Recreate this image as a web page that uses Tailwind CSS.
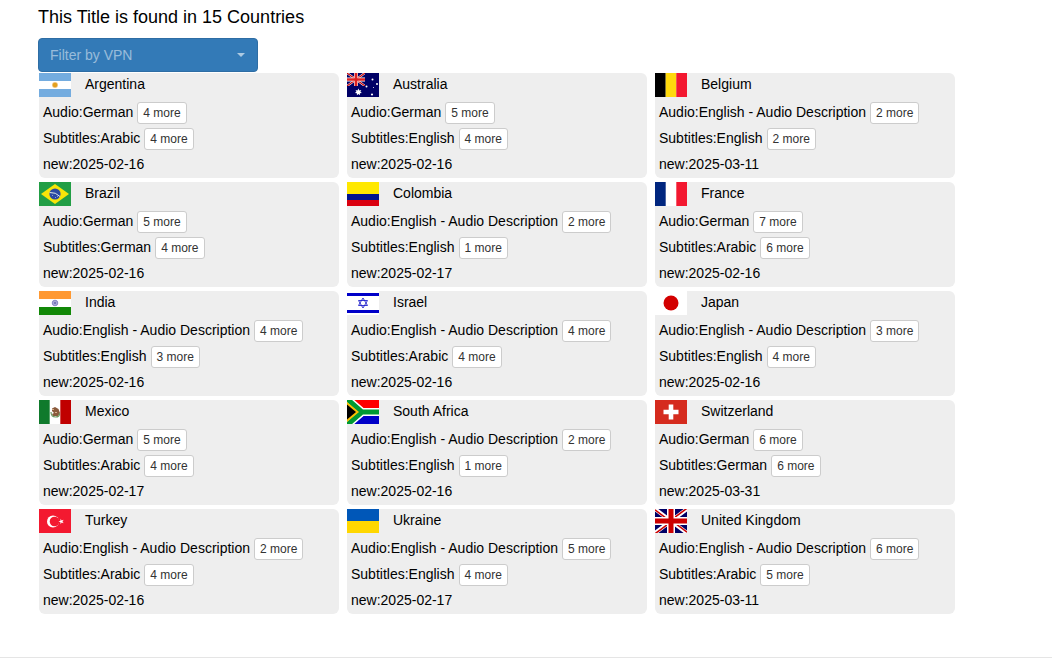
<!DOCTYPE html>
<html lang="en">
<head>
    <meta charset="UTF-8">
    <meta name="viewport" content="width=device-width, initial-scale=1.0">
    <title>Countries</title>
    <script src="https://cdn.jsdelivr.net/npm/@tailwindcss/browser@4"></script>
</head>
<body class="bg-white font-['Liberation_Sans',Arial,sans-serif] text-sm text-black">

    <!-- flags -->
    <svg class="hidden">
        <symbol id="ar" viewBox="0 0 32 24">
            <path fill="#fff" d="M0 0h32v24H0z"/>
            <path fill="#74acdf" d="M0 0h32v8H0zM0 16h32v8H0z"/>
            <circle cx="16" cy="12" r="3" fill="#f3c989"/>
            <circle cx="16" cy="12" r="2.3" fill="#e3a01f"/>
        </symbol>
        <symbol id="au" viewBox="0 0 32 24">
            <path fill="#006" d="M0 0h32v24H0z"/>
            <svg width="18" height="13" viewBox="0 0 32 24" preserveAspectRatio="none">
                <path stroke="#fff" stroke-width="4" d="M0 0l32 24M32 0L0 24"/>
                <path stroke="#c00" stroke-width="2" d="M0 0l32 24M32 0L0 24"/>
                <path stroke="#fff" stroke-width="7" d="M16 0v24M0 12h32"/>
                <path stroke="#d22" stroke-width="5" d="M16 0v24M0 12h32"/>
            </svg>
            <path fill="#fff" d="M11.500 15.500l.8 1.900 2-.5-.9 1.800 1.500 1.300-2 .3v2l-1.500-1.300-1.500 1.300v-2l-2-.3 1.500-1.300-.9-1.800 2 .5z"/>
            <g fill="#fff">
                <circle cx="19.500" cy="13.500" r="1"/>
                <circle cx="25.500" cy="6.500" r="1"/>
                <circle cx="30" cy="11" r="1"/>
                <circle cx="25" cy="21.500" r="1.100"/>
                <circle cx="26.500" cy="14.500" r=".5"/>
            </g>
        </symbol>
        <symbol id="be" viewBox="0 0 32 24">
            <path d="M0 0h10.700v24H0z"/>
            <path fill="#ffd90c" d="M10.700 0h10.600v24H10.700z"/>
            <path fill="#f31830" d="M21.300 0H32v24H21.300z"/>
        </symbol>
        <symbol id="br" viewBox="0 0 32 24">
            <path fill="#229e45" d="M0 0h32v24H0z"/>
            <path fill="#f8e509" d="M16 2l14 10-14 10L2 12z"/>
            <circle cx="16" cy="12" r="5.600" fill="#2b49a3"/>
            <path fill="none" stroke="#dfe8e8" d="M10.700 10.500q6-.5 10.300 4"/>
            <path fill="#8d9ccc" d="M13 13h1v1h-1zM16 15h1v1h-1zM18 14h1v1h-1z"/>
        </symbol>
        <symbol id="co" viewBox="0 0 32 24">
            <path fill="#ffe800" d="M0 0h32v12H0z"/>
            <path fill="#00148e" d="M0 12h32v6H0z"/>
            <path fill="#da0010" d="M0 18h32v6H0z"/>
        </symbol>
        <symbol id="fr" viewBox="0 0 32 24">
            <path fill="#fff" d="M0 0h32v24H0z"/>
            <path fill="#00267f" d="M0 0h10.700v24H0z"/>
            <path fill="#f31830" d="M21.300 0H32v24H21.300z"/>
        </symbol>
        <symbol id="in" viewBox="0 0 32 24">
            <path fill="#fff" d="M0 0h32v24H0z"/>
            <path fill="#f93" d="M0 0h32v8H0z"/>
            <path fill="#128807" d="M0 16h32v8H0z"/>
            <circle cx="16" cy="12" r="2.800" fill="#a9a9d6" stroke="#8080c0" stroke-width=".9"/>
            <circle cx="16" cy="12" r="1" fill="#6666b0"/>
        </symbol>
        <symbol id="il" viewBox="0 0 32 24">
            <path fill="#fff" d="M0 0h32v24H0z"/>
            <path fill="#0000c8" d="M0 2h32v3H0zM0 19h32v3H0z"/>
            <path fill="none" stroke="#2222cc" stroke-width=".9" d="M16 7l4.500 7.500h-9zM16 17l4.500-7.500h-9z"/>
        </symbol>
        <symbol id="jp" viewBox="0 0 32 24">
            <path fill="#fff" d="M0 0h32v24H0z"/>
            <circle cx="16" cy="12" r="7.500" fill="#d30000"/>
        </symbol>
        <symbol id="mx" viewBox="0 0 32 24">
            <path fill="#fff" d="M0 0h32v24H0z"/>
            <path fill="#0f7a2c" d="M0 0h10.700v24H0z"/>
            <path fill="#c00000" d="M21.300 0H32v24H21.300z"/>
            <path fill="#8a5a3c" d="M13 8.500l3-1.500 3.500 2 1.500 4-2 3h-5l-1-2 2-1-2-2z"/>
            <path fill="none" stroke="#6f9a62" stroke-width="1.200" d="M12 12q0 5 4.500 5t4-4"/>
            <path fill="#d8b08c" d="M13 9h2v1h-2zM16 12h2v1h-2z"/>
        </symbol>
        <symbol id="za" viewBox="0 0 32 24">
            <path fill="#fff" d="M0 0h32v24H0z"/>
            <path fill="#f00" d="M5 0h27v8H16z"/>
            <path fill="#0000c8" d="M5 24h27v-8H16z"/>
            <path fill="none" stroke="#fff" stroke-width="8" d="M-1-2l16 14L-1 26M14 12h18"/>
            <path fill="none" stroke="#009a33" stroke-width="5" d="M-1-2l16 14L-1 26M14 12h18"/>
            <path fill="#fcbf00" d="M0 2l12 10L0 22z"/>
            <path d="M0 4.500L9 12 0 19.500z"/>
        </symbol>
        <symbol id="ch" viewBox="0 0 32 24">
            <path fill="#d52b1e" d="M0 0h32v24H0z"/>
            <path fill="#fff" d="M13.700 4.500h4.600v5.200h5.200v4.600h-5.200v5.200h-4.600v-5.200H8.500V9.700h5.200z"/>
        </symbol>
        <symbol id="tr" viewBox="0 0 32 24">
            <path fill="#f31930" d="M0 0h32v24H0z"/>
            <circle cx="14" cy="12.500" r="6" fill="#fff"/>
            <circle cx="15.500" cy="12.500" r="4.800" fill="#f31930"/>
            <path fill="#fff" d="M19.500 12.500l2-.7v-2l1.200 1.600 2-.6-1.200 1.700 1.200 1.700-2-.6-1.200 1.600v-2z"/>
        </symbol>
        <symbol id="ua" viewBox="0 0 32 24">
            <path fill="#0057b8" d="M0 0h32v12H0z"/>
            <path fill="#ffd700" d="M0 12h32v12H0z"/>
        </symbol>
        <symbol id="gb" viewBox="0 0 32 24">
            <path fill="#006" d="M0 0h32v24H0z"/>
            <path stroke="#fff" stroke-width="4" d="M0 0l32 24M32 0L0 24"/>
            <path stroke="#c00" stroke-width="1.500" d="M0 .8l16 12M32 23.200l-16-12M32-.8l-16 12M0 24.800l16-12"/>
            <path stroke="#fff" stroke-width="8" d="M16 0v24M0 12h32"/>
            <path stroke="#c00" stroke-width="5" d="M16 0v24M0 12h32"/>
        </symbol>
    </svg>

    <!-- Main content -->
    <div class="pl-[38px]">
        <h1 class="pt-1.5 text-lg leading-[22px]">This Title is found in 15 Countries</h1>

        <div class="relative mt-2.5 w-[220px]">
            <select aria-label="Filter by VPN" class="block h-[34px] w-full appearance-none rounded border border-[#2e6da4] bg-[#337ab7] px-[11px] text-white/50">
                <option>Filter by VPN</option>
            </select>
            <span class="pointer-events-none absolute top-[15px] right-[13px] border-x-4 border-t-4 border-x-transparent border-t-white/60"></span>
        </div>

        <div id="countries" class="mt-px ml-px flex flex-wrap gap-x-2 gap-y-1"></div>
    </div>

    <hr class="mt-[43px] border-[#e5e5e5]">

    <script>
        // flag, country, audio, more audio, subtitles, more subtitles, new
        const countries = [
            ['ar', 'Argentina', 'German', 4, 'Arabic', 4, '2025-02-16'],
            ['au', 'Australia', 'German', 5, 'English', 4, '2025-02-16'],
            ['be', 'Belgium', 'English - Audio Description', 2, 'English', 2, '2025-03-11'],
            ['br', 'Brazil', 'German', 5, 'German', 4, '2025-02-16'],
            ['co', 'Colombia', 'English - Audio Description', 2, 'English', 1, '2025-02-17'],
            ['fr', 'France', 'German', 7, 'Arabic', 6, '2025-02-16'],
            ['in', 'India', 'English - Audio Description', 4, 'English', 3, '2025-02-16'],
            ['il', 'Israel', 'English - Audio Description', 4, 'Arabic', 4, '2025-02-16'],
            ['jp', 'Japan', 'English - Audio Description', 3, 'English', 4, '2025-02-16'],
            ['mx', 'Mexico', 'German', 5, 'Arabic', 4, '2025-02-17'],
            ['za', 'South Africa', 'English - Audio Description', 2, 'English', 1, '2025-02-16'],
            ['ch', 'Switzerland', 'German', 6, 'German', 6, '2025-03-31'],
            ['tr', 'Turkey', 'English - Audio Description', 2, 'Arabic', 4, '2025-02-16'],
            ['ua', 'Ukraine', 'English - Audio Description', 5, 'English', 4, '2025-02-17'],
            ['gb', 'United Kingdom', 'English - Audio Description', 6, 'Arabic', 5, '2025-03-11'],
        ];

        const moreButton = (n) => `<button type="button" class="mt-0.5 h-[22px] rounded-[3px] border border-[#ccc] bg-white px-[5px] text-xs text-[#333]">${n} more</button>`;

        document.getElementById('countries').innerHTML = countries.map(([flag, name, audio, moreAudio, subs, moreSubs, date]) => `
            <div class="w-[300px] rounded-md bg-[#eee] pb-px">
                <div class="flex h-[26px] gap-3.5">
                    <svg class="h-6 w-8" aria-hidden="true"><use href="#${flag}"/></svg>
                    <h2 class="leading-[22px]">${name}</h2>
                </div>
                <div class="flex h-[26px] items-center gap-1 pl-1"><span>Audio:${audio}</span>${moreButton(moreAudio)}</div>
                <div class="flex h-[26px] items-center gap-1 pl-1"><span>Subtitles:${subs}</span>${moreButton(moreSubs)}</div>
                <div class="flex h-[26px] items-center pl-1">new:${date}</div>
            </div>`).join('');
    </script>
</body>
</html>
